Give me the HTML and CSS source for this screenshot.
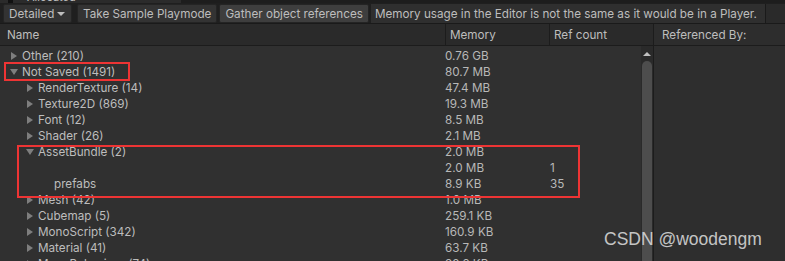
FILE: index.html
```html
<!DOCTYPE html>
<html>
    <head>
        <title>Memory Profiler</title>
        <link rel="stylesheet" href="styles.css">
    </head>
    <body>
        <div class="topStrip">
            <div class="allocated"><span class="check"></span>Allocated</div>
        </div>

        <div class="toolbar">
            <div class="tbButton dropdown">Detailed <span class="caret"></span></div>
            <div class="tbButton">Take Sample Playmode</div>
            <div class="tbButton active">Gather object references</div>
            <div class="tbLabel">Memory usage in the Editor is not the same as it would be in a Player.</div>
            <div class="tbRest"></div>
        </div>

        <div class="header">
            <div class="col colName">Name</div>
            <div class="col colMem">Memory</div>
            <div class="col colRef">Ref count</div>
            <div class="col colBy">Referenced By:</div>
        </div>

        <div class="main">
            <div class="tree">
                <div class="row"><div class="name l0"><span class="arrow"></span>Other (210)</div><div class="mem">0.76 GB</div><div class="ref"></div></div>
                <div class="row"><div class="name l0"><span class="arrow open"></span>Not Saved (1491)</div><div class="mem">80.7 MB</div><div class="ref"></div></div>
                <div class="row"><div class="name l1"><span class="arrow"></span>RenderTexture (14)</div><div class="mem">47.4 MB</div><div class="ref"></div></div>
                <div class="row"><div class="name l1"><span class="arrow"></span>Texture2D (869)</div><div class="mem">19.3 MB</div><div class="ref"></div></div>
                <div class="row"><div class="name l1"><span class="arrow"></span>Font (12)</div><div class="mem">8.5 MB</div><div class="ref"></div></div>
                <div class="row"><div class="name l1"><span class="arrow"></span>Shader (26)</div><div class="mem">2.1 MB</div><div class="ref"></div></div>
                <div class="row"><div class="name l1"><span class="arrow open"></span>AssetBundle (2)</div><div class="mem">2.0 MB</div><div class="ref"></div></div>
                <div class="row"><div class="name l2"></div><div class="mem">2.0 MB</div><div class="ref">1</div></div>
                <div class="row"><div class="name l2">prefabs</div><div class="mem">8.9 KB</div><div class="ref">35</div></div>
                <div class="row"><div class="name l1"><span class="arrow"></span>Mesh (42)</div><div class="mem">1.0 MB</div><div class="ref"></div></div>
                <div class="row"><div class="name l1"><span class="arrow"></span>Cubemap (5)</div><div class="mem">259.1 KB</div><div class="ref"></div></div>
                <div class="row"><div class="name l1"><span class="arrow"></span>MonoScript (342)</div><div class="mem">160.9 KB</div><div class="ref"></div></div>
                <div class="row"><div class="name l1"><span class="arrow"></span>Material (41)</div><div class="mem">63.7 KB</div><div class="ref"></div></div>
                <div class="row"><div class="name l1"><span class="arrow"></span>MonoBehaviour (74)</div><div class="mem">38.6 KB</div><div class="ref"></div></div>
            </div>
            <div class="scrollbar">
                <div class="scrollUp"></div>
                <div class="thumb"></div>
            </div>
            <div class="refPane"></div>
        </div>

        <div class="mark markSaved"></div>
        <div class="mark markBundle"></div>
        <div class="watermark">CSDN @woodengm</div>
    </body>
</html>
```

FILE: styles.css
```css
body {
    margin: 0;
    width: 785px;
    height: 261px;
    overflow: hidden;
    position: relative;
    background-color: #303030;
    font-family: Inter, "Noto Sans", sans-serif;
    font-size: 11.7px;
    color: #bdbdbd;
}
.topStrip {
    height: 3px;
    background-color: #1d1d1d;
    overflow: hidden;
}
.allocated {
    width: 181px;
    height: 16px;
    margin-top: -11px;
    background-color: #2b2b2b;
    display: flex;
    align-items: center;
    padding-left: 8px;
    box-sizing: border-box;
    font-size: 11px;
}
.check {
    width: 5px;
    height: 12px;
    background-color: #111;
    margin-right: 14px;
}
.toolbar {
    display: flex;
    height: 21px;
    background-color: #1f1f1f;
    border-bottom: 1px solid #1a1a1a;
    box-sizing: border-box;
    padding-top: 1px;
}
.tbButton {
    display: flex;
    align-items: center;
    padding: 0 5px;
    background-color: #333333;
    border: 1px solid #242424;
    border-radius: 2px;
    margin-left: 2px;
    white-space: nowrap;
}
.dropdown {
    width: 69px;
    box-sizing: border-box;
    margin-left: 3px;
    margin-right: 3px;
    justify-content: space-between;
}
.caret {
    width: 0;
    height: 0;
    border-left: 4px solid transparent;
    border-right: 4px solid transparent;
    border-top: 4px solid #bdbdbd;
    margin-right: 1px;
}
.active {
    background-color: #3e3e3e;
}
.tbLabel {
    display: flex;
    align-items: center;
    padding: 0 5px 0 4px;
    width: 395px;
    box-sizing: border-box;
    background-color: #2f2f2f;
    border-right: 1px solid #1a1a1a;
    margin-left: 2px;
    white-space: nowrap;
    overflow: hidden;
}
.tbRest {
    flex: 1;
    background-color: #2a2a2a;
}
.header {
    display: flex;
    height: 22px;
    background-color: #2a2a2a;
    border-bottom: 1px solid #1c1c1c;
    box-sizing: border-box;
}
.col {
    display: flex;
    align-items: center;
    padding-left: 4px;
    box-sizing: border-box;
    border-right: 1px solid #1c1c1c;
}
.colName {
    width: 446px;
    padding-left: 7px;
}
.colMem {
    width: 104px;
}
.colRef {
    width: 104px;
}
.colBy {
    flex: 1;
    border-right: none;
    padding-left: 8px;
    background-color: #2d2d2d;
}
.main {
    display: flex;
    height: 216px;
}
.tree {
    width: 641px;
    overflow: hidden;
    padding-top: 2px;
}
.row {
    display: flex;
    height: 16px;
    align-items: center;
    white-space: nowrap;
}
.name {
    width: 445px;
    box-sizing: border-box;
    display: flex;
    align-items: center;
}
.l0 {
    padding-left: 11px;
}
.l1 {
    padding-left: 27px;
}
.l2 {
    padding-left: 54px;
}
.arrow {
    width: 0;
    height: 0;
    border-top: 4px solid transparent;
    border-bottom: 4px solid transparent;
    border-left: 6px solid #7e7e7e;
    margin-right: 5px;
}
.arrow.open {
    border-left: 4px solid transparent;
    border-right: 4px solid transparent;
    border-top: 6px solid #7e7e7e;
    border-bottom: none;
    margin-left: -1px;
    margin-right: 4px;
}
.mem {
    width: 105px;
    color: #b8b8b8;
}
.ref {
    color: #b8b8b8;
}
.scrollbar {
    width: 12px;
    background-color: #2a2a2a;
    display: flex;
    flex-direction: column;
    align-items: center;
    border-right: 1px solid #1c1c1c;
}
.scrollUp {
    width: 0;
    height: 0;
    border-left: 4px solid transparent;
    border-right: 4px solid transparent;
    border-bottom: 4px solid #c0c0c0;
    margin-top: 6px;
}
.thumb {
    width: 10px;
    flex: 1;
    margin-top: 5px;
    background-color: #4d4d4d;
    border-radius: 5px 5px 0 0;
}
.refPane {
    flex: 1;
    background-color: #2e2e2e;
}
.mark {
    position: absolute;
    border: 2px solid #ee3434;
    box-sizing: border-box;
}
.markSaved {
    left: 4px;
    top: 62px;
    width: 126px;
    height: 19px;
}
.markBundle {
    left: 17px;
    top: 145px;
    width: 563px;
    height: 53px;
}
.watermark {
    position: absolute;
    left: 604px;
    top: 229px;
    font-family: "Liberation Sans", Arial, sans-serif;
    font-size: 17.5px;
    color: rgba(225, 225, 225, 0.85);
}
```
